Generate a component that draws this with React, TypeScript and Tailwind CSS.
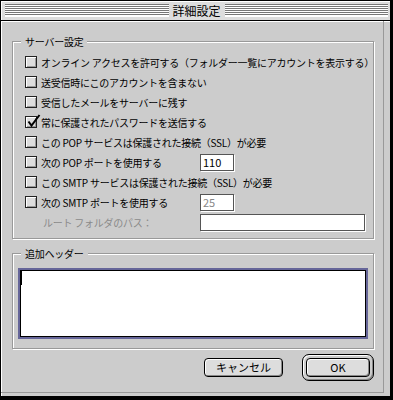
import React from "react"

const stripes =
  "flex-1 h-[13px] bg-[image:repeating-linear-gradient(#777777_0px,#777777_1px,#ffffff_1px,#ffffff_2px)] shadow-[inset_0_-1px_0_#ffffff]"

function Check({ checked }: { checked?: boolean }) {
  return (
    <span className="relative block w-[12px] h-[12px] shrink-0 border border-[#222222] bg-[#dddddd] shadow-[inset_1px_1px_0_#ffffff,inset_-1px_-1px_0_#999999]">
      {checked && (
        <svg
          className="absolute left-[0px] top-[-3px] w-[15px] h-[14px] overflow-visible"
          viewBox="0 0 15 14"
        >
          <path d="M2.5 7.5 L5.5 11.5 L13.5 1" stroke="#000000" strokeWidth="2" fill="none" />
        </svg>
      )}
    </span>
  )
}

function Field({ width, value, dim }: { width: string; value?: string; dim?: boolean }) {
  return (
    <div
      className={`${width} h-[17px] border border-[#555555] bg-white shadow-[1px_1px_0_#ffffff] text-[11px] leading-[15px] pl-[2px] tracking-normal ${
        dim ? "text-[#888888]" : "text-black"
      }`}
    >
      {value}
    </div>
  )
}

function Row({ label, checked, input }: { label: string; checked?: boolean; input?: React.ReactNode }) {
  return (
    <div className="flex items-center h-[20px] whitespace-nowrap">
      <div className={`flex items-center gap-[4px] ${input ? "w-[175px] shrink-0" : ""}`}>
        <Check checked={checked} />
        <span>{label}</span>
      </div>
      {input}
    </div>
  )
}

export default function App() {
  return (
    <div className="w-[393px] h-[400px] flex flex-col border-l border-t border-r-[3px] border-b-[4px] border-black bg-[#cccccc] font-['Noto_Sans_CJK_JP','Noto_Sans',sans-serif] text-[10px] tracking-[-0.25px] text-black">
      {/* title bar */}
      <div className="h-[20px] shrink-0 flex items-center pl-[4px] pr-[2px] border-b border-black bg-[#dddddd] shadow-[inset_1px_1px_0_#ffffff]">
        <div className={stripes} />
        <span className="px-[4px] text-[12px] leading-[14px] tracking-normal">詳細設定</span>
        <div className={stripes} />
      </div>

      <div className="flex-1 flex shadow-[inset_1px_1px_0_#ffffff]">
        <div className="flex-1 min-w-0 flex flex-col mr-[6px] mb-[3px] pt-[14px] pl-[11px] pr-[9px] border-r border-b border-[#999999]">
          <fieldset className="min-w-0 border border-[#999999] shadow-[inset_1px_1px_0_#ffffff,1px_1px_0_#ffffff]">
            <legend className="ml-[8px] px-[4px] leading-[13px] bg-[#cccccc]">サーバー設定</legend>
            <div className="pl-[12px] pt-[4px] pb-[6px]">
              <Row label="オンライン アクセスを許可する（フォルダー一覧にアカウントを表示する）" />
              <Row label="送受信時にこのアカウントを含まない" />
              <Row label="受信したメールをサーバーに残す" />
              <Row label="常に保護されたパスワードを送信する" checked />
              <Row label="この POP サービスは保護された接続（SSL）が必要" />
              <Row label="次の POP ポートを使用する" input={<Field width="w-[34px]" value="110" />} />
              <Row label="この SMTP サービスは保護された接続（SSL）が必要" />
              <Row label="次の SMTP ポートを使用する" input={<Field width="w-[34px]" value="25" dim />} />
              <div className="flex items-center h-[20px] whitespace-nowrap">
                <span className="w-[175px] shrink-0 pl-[18px] text-[#8a8a8a]">ルート フォルダのパス：</span>
                <Field width="w-[165px]" />
              </div>
            </div>
          </fieldset>

          <fieldset className="min-w-0 mt-[8px] border border-[#999999] shadow-[inset_1px_1px_0_#ffffff,1px_1px_0_#ffffff]">
            <legend className="ml-[8px] px-[4px] leading-[13px] bg-[#cccccc]">追加ヘッダー</legend>
            <div className="px-[5px] pt-[8px] pb-[9px]">
              <div className="h-[71px] border-2 border-[#666699]">
                <div className="h-full border border-black bg-white">
                  <div className="w-[1px] h-[14px] bg-black" />
                </div>
              </div>
            </div>
          </fieldset>

          <div className="flex items-center justify-end gap-[19px] mt-[5px]">
            <button className="w-[79px] h-[19px] rounded-[4px] border border-black bg-[#dddddd] shadow-[inset_1px_1px_0_#ffffff,inset_-1px_-1px_0_#888888] text-[11px] leading-none tracking-normal">
              キャンセル
            </button>
            <div className="rounded-[7px] border border-black p-[3px] bg-[#cccccc] shadow-[inset_1px_1px_0_#ffffff,inset_-1px_-1px_0_#888888]">
              <button className="block w-[64px] h-[19px] rounded-[4px] border border-black bg-[#dddddd] shadow-[inset_1px_1px_0_#ffffff,inset_-1px_-1px_0_#888888] text-[11px] leading-none tracking-normal">
                OK
              </button>
            </div>
          </div>
        </div>
      </div>
    </div>
  )
}
